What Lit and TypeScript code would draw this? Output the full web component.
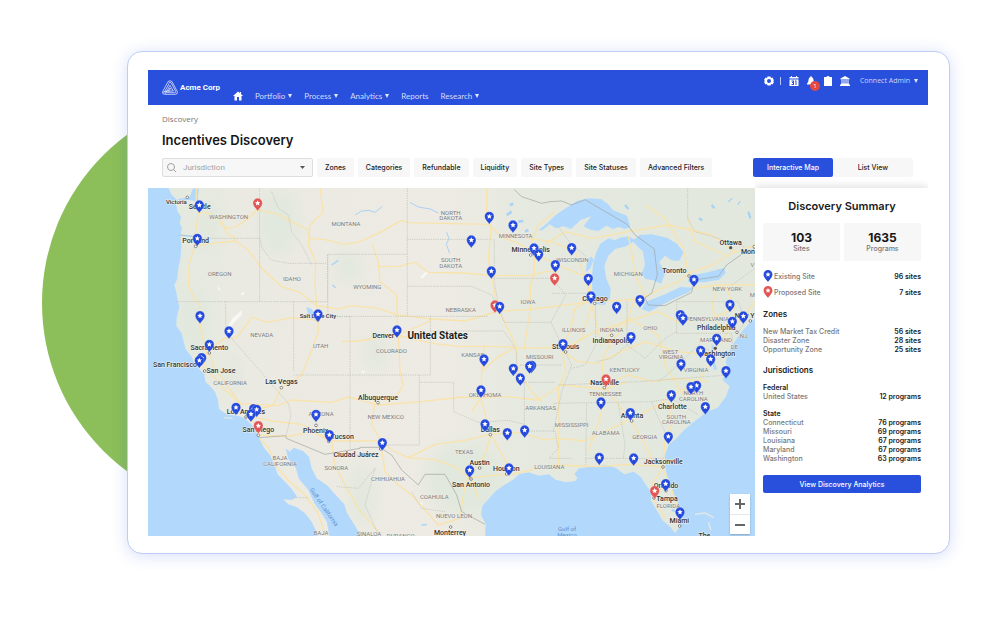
import { LitElement, html, css, svg } from "lit";
import { customElement, state } from "lit/decorators.js";

type Label = [string, number, number];

/* Map geometry: three units per pixel. */
const OCEANS = [
  "M0 0H66L80 30L98 46L93 58L98 80L108 95L104 115L111 130L106 150L109 180L107 215L100 250L97 282L88 300L94 322L98 345L103 365L95 398L94 422L110 445L116 470L122 492L140 516L150 540L163 553L178 568L181 590L196 604L210 620L219 645L222 672L245 688L280 693L300 700L320 720L335 735L343 760L355 785L375 810L388 838L398 868L418 888L440 912L456 935L440 945L415 943L430 958L455 966L480 985L500 1010L512 1035L520 1060H0Z",
  "M422 790L430 822L452 848L462 882L490 915L508 955L530 985L545 1010L555 1060H650L632 1025L606 985L598 958L572 930L548 902L515 880L500 850L492 815L474 798L446 788L434 800Z",
  "M1020 1060L1022 1018L1008 990L1012 962L1034 938L1052 918L1078 900L1104 884L1122 868L1150 862L1182 872L1212 868L1232 884L1262 892L1290 888L1298 880L1288 868L1302 850L1340 845L1382 840L1412 848L1438 868L1466 860L1488 876L1506 905L1520 920L1517 945L1535 975L1552 1006L1574 1024L1590 1044L1602 1028L1609 995L1596 948L1574 898L1562 855L1559 812L1572 778L1596 758L1618 734L1650 708L1686 680L1718 668L1742 636L1754 604L1732 584L1750 556L1742 530L1752 500L1770 468L1790 440L1806 422L1830 400V1060Z",
  "M1180 136L1205 116L1232 90L1262 70L1296 48L1330 40L1368 42L1388 56L1404 76L1446 92L1456 126L1440 132L1422 126L1404 132L1385 122L1360 138L1336 134L1316 124L1338 94L1306 106L1278 132L1256 124L1232 130L1214 118L1192 136Z",
  "M1390 160L1366 176L1352 206L1344 240L1340 280L1343 330L1356 358L1378 360L1395 340L1397 310L1384 282L1378 244L1390 212L1410 192L1444 184L1472 166L1450 154L1424 158L1410 166Z",
  "M1322 262L1326 232L1338 214L1346 224L1336 250Z",
  "M1462 168L1484 150L1520 148L1566 158L1596 176L1616 202L1602 228L1580 226L1560 212L1542 232L1562 262L1548 296L1524 286L1502 282L1490 268L1500 238L1494 200Z",
  "M1490 372L1502 350L1524 342L1560 328L1606 306L1646 308L1630 322L1590 340L1546 362L1512 380Z",
  "M1628 290L1636 272L1688 262L1738 248L1742 264L1722 284L1676 292Z",
  "M484 366L500 372L516 396L512 408L492 398Z",
  "M144 10L162 12L158 40L168 58L160 72L150 48L128 44L104 50L100 42L134 36Z",
  "M1700 476L1710 490L1706 520L1716 552L1708 556L1698 524Z",
];

const ROADS = [
  "M155 10L152 60L160 85L150 150L146 190L132 240L130 300L150 345L163 360L168 440L185 500L175 550",
  "M160 82Q210 80 232 118T338 74L400 88L440 110L488 134L495 160L540 164L600 178L645 170L700 145L768 106L790 113L1030 118L1075 158L1120 175L1168 205",
  "M156 182L200 175L270 168L310 195L350 250L410 305L465 322L515 362L580 372L620 362L700 370L758 390L860 402L960 408L1062 378L1145 374L1215 366L1340 350L1440 345L1492 340",
  "M232 118L230 108M230 112L248 148L268 156L272 168M525 10L535 80L495 120L490 180L512 230L510 300L518 390L520 440L495 510L470 570L410 608L385 660L322 678",
  "M192 495L205 545L240 590L280 650L300 690L322 705L340 750",
  "M192 492L240 460L275 458L322 396L365 412L440 398L519 406",
  "M182 545L236 612L288 656L400 662L440 645L560 652L610 636L700 660L830 650L950 636L1010 640L1080 634L1180 645L1250 600L1380 612L1450 590",
  "M300 690L380 708L470 718L512 738L552 768L610 768L710 768L740 795L790 818L870 778L960 766L1035 748L1120 742L1200 764L1240 760L1320 768L1450 706",
  "M512 722V745L556 770M340 750L430 754L510 738M690 655L680 720L710 770M760 450L765 560L775 600L752 640M682 180L700 230L705 290L755 330L758 450",
  "M700 245H760L810 232L850 262L960 264L1040 272L1160 272L1200 260L1240 260",
  "M1025 10V90L1038 130L1030 220L1042 290L1058 370L1098 450L1115 490L1210 488L1260 490L1350 440L1450 408L1540 380L1600 412L1700 400L1770 370",
  "M590 470L640 468L755 450L830 420L860 405M757 450L800 462L870 476L940 484L1018 484L1110 486L1055 518L1010 560L1008 640L1024 700L1038 750L1078 820L1100 870",
  "M1010 560L1018 484M1008 638L980 680M1038 750L1020 810L980 865L960 900L945 1000M960 880L1040 872L1100 868L1180 850L1230 840L1360 845L1450 838L1550 845",
  "M790 818L870 824L930 845L978 882M978 882L1000 940M1115 490L1120 560L1160 620L1190 650",
  "M1168 205V270L1156 300V370L1138 490M1168 205L1160 170L1180 120L1230 80M1168 205L1240 240L1290 262L1335 280L1338 340",
  "M1338 340L1290 370L1280 420L1252 500L1262 560L1240 610L1242 700L1240 850M1252 500L1310 460L1340 360L1370 480L1400 440L1450 400L1465 350L1500 335",
  "M1252 500L1300 530L1360 535L1430 500L1500 470L1600 500L1690 510",
  "M1378 600L1370 525L1400 470L1450 410M1378 600L1450 570L1520 590L1600 580L1690 590",
  "M1378 602L1370 680L1350 740L1330 800M1378 602L1420 660L1455 700L1490 760L1530 842L1555 850",
  "M1455 706L1540 660L1600 620L1660 590L1690 540L1710 490L1760 430L1790 400L1830 350",
  "M1570 650L1580 720L1560 770L1552 850L1575 900L1596 960L1605 1000M1552 850L1520 900L1530 950L1560 1000M1530 925L1575 898",
  "M1500 335L1470 270L1460 200L1450 155M1500 335L1550 310L1600 290L1630 265L1700 240L1760 205L1830 180M1630 265L1615 190L1560 100L1500 60",
  "M1645 310L1720 300L1790 300L1830 300M1720 300L1700 360L1720 420L1712 480M1770 370L1740 300M1450 400L1540 450L1560 540L1620 640",
  "M1340 350L1320 280L1290 200L1220 170L1150 160M1200 180L1260 140L1340 160L1450 140L1570 120L1700 150L1770 200M1628 100L1650 170L1740 210",
  "M345 762L372 790L398 850L430 885L475 925L520 985L540 1050M560 772L570 840L600 900L640 970L700 1040M710 790L720 860L760 900L800 930L880 1020L945 1000",
];

const STATES = [
  "M344 10V350M97 350H548V208H787M446 350V560M242 350V440L430 655L438 690L424 750",
  "M548 208V350M548 395H615M548 350L549 395M548 394H1030M787 10V394M787 163H1040M787 304H980L1040 330L1062 370",
  "M615 395V790M856 394V570M856 438H1075L1100 470L1114 500V592M446 570H856M823 570V780H720M823 592H926V680L1000 712L1090 706L1138 718",
  "M1048 163V290L1062 370L1078 412H1218M1046 280H1220M1114 592H1232M1138 592V720M1138 738H1230L1240 790L1212 820H1280",
  "M278 160H344M344 160L352 190L378 225L430 235H548M380 20L400 70L430 90L440 140L470 180L500 240M110 150L180 160L278 160",
  "M1220 280L1262 330L1218 412L1250 480L1280 540L1250 620L1225 740M1220 325H1340M1352 355V480L1320 540L1280 550M1446 350V480L1400 520L1352 530",
  "M1240 600L1480 590L1750 570M1225 655L1520 650L1580 640L1660 690M1325 655L1322 840M1420 655L1440 780L1435 820M1322 820H1430L1560 820M1520 650L1540 700L1575 770",
  "M1595 350H1780L1800 410L1780 440M1595 350V445H1760L1765 500M1446 480L1500 520L1560 460L1595 440M1540 590L1600 540L1660 480L1700 500M1628 10V100L1650 140L1720 160L1800 185M1760 300L1830 250",
  "M1240 125L1280 180L1325 215M445 938H490M1125 540L1250 540M575 905L640 910L690 850M690 850L660 960L700 1050M800 920L830 970L900 980",
];

const FRONTIERS = [
  "M343 758L422 752L424 760L540 808L645 790L645 787H705L740 810L770 855L820 900L840 868H900L935 930L950 980L1020 1018",
  "M1108 14L1130 35L1190 55L1215 50L1250 48L1280 60L1320 44L1446 118L1470 150L1528 192L1537 270L1520 325L1500 338L1510 360L1560 362L1640 322L1648 285L1720 274L1745 240L1790 208L1830 190",
];

const REGIONS: Label[] = [
  ["WASHINGTON", 251, 96], ["MONTANA", 603, 115], ["OREGON", 224, 266], ["IDAHO", 441, 281], ["NEVADA", 350, 450],
  ["UTAH", 527, 481], ["WYOMING", 667, 304], ["NORTH", 917, 82], ["DAKOTA", 917, 99], ["SOUTH", 917, 225], ["DAKOTA", 917, 242],
  ["NEBRASKA", 947, 374], ["COLORADO", 739, 498], ["KANSAS", 983, 508], ["IOWA", 1149, 351], ["MINNESOTA", 1112, 151],
  ["MISSOURI", 1184, 516], ["WISCONSIN", 1282, 223], ["MICHIGAN", 1450, 267], ["NEW YORK", 1747, 310], ["ILLINOIS", 1286, 433],
  ["INDIANA", 1400, 433], ["OHIO", 1516, 427], ["PENNSYLVANIA", 1687, 402], ["MARYLAND", 1713, 463], ["NJ", 1796, 452], ["DE", 1768, 486],
  ["WEST", 1576, 499], ["VIRGINIA", 1578, 516], ["CALIFORNIA", 255, 594], ["ARIZONA", 528, 685], ["BAJA", 405, 818], ["CALIFORNIA", 405, 835],
  ["SONORA", 574, 848], ["BAJA", 528, 1042], ["NEW MEXICO", 722, 694], ["OKLAHOMA", 1020, 628], ["ARKANSAS", 1187, 669], ["TEXAS", 957, 800],
  ["LOUISIANA", 1213, 844], ["CHIHUAHUA", 729, 880], ["COAHUILA", 868, 936], ["NUEVO LEÓN", 927, 992], ["SINALOA", 672, 1046], ["DURANGO", 767, 1052],
  ["KENTUCKY", 1439, 555], ["TENNESSEE", 1381, 627], ["VIRGINIA", 1653, 555], ["NORTH", 1645, 623], ["CAROLINA", 1645, 640],
  ["SOUTH", 1594, 694], ["CAROLINA", 1594, 711], ["MISSISSIPPI", 1280, 718], ["ALABAMA", 1382, 743], ["GEORGIA", 1499, 755], ["FLORIDA", 1570, 961],
  ["V", 1822, 238], ["M", 1822, 330],
];

const CITIES: Label[] = [
  ["Seattle", 164, 64], ["Portland", 152, 167], ["Sacramento", 193, 488], ["San Francisco", 90, 539], ["San Jose", 228, 558],
  ["Las Vegas", 409, 591], ["Los Angeles", 303, 679], ["San Diego", 340, 735], ["Phoenix", 512, 737], ["Tucson", 592, 754],
  ["Ciudad Juárez", 633, 809], ["Denver", 715, 453], ["Minneapolis", 1157, 194], ["Albuquerque", 699, 637], ["Dallas", 1036, 733],
  ["Austin", 1004, 833], ["Houston", 1084, 852], ["San Antonio", 978, 899], ["Monterrey", 915, 1043], ["Chicago", 1350, 340],
  ["Toronto", 1588, 257], ["Ottawa", 1757, 172], ["Mon", 1809, 201], ["Indianapolis", 1400, 468], ["St. Louis", 1262, 485],
  ["Philadelphia", 1714, 427], ["New Y", 1799, 393], ["Washington", 1715, 507], ["Nashville", 1379, 592], ["Charlotte", 1582, 664],
  ["Atlanta", 1461, 693], ["Jacksonville", 1555, 830], ["Orlando", 1563, 902], ["Tampa", 1566, 940], ["Miami", 1603, 1007], ["The", 1678, 1052],
];

const DOTS: [number, number][] = [
  [127, 37], [152, 184], [193, 504], [179, 558], [409, 608], [303, 696], [340, 751], [513, 721], [551, 769], [707, 792],
  [699, 653], [1036, 749], [1004, 849], [1085, 867], [978, 882], [917, 1026], [1157, 210], [1349, 355], [1632, 273], [1400, 451],
  [1262, 501], [1776, 442], [1816, 408], [1378, 608], [1460, 708], [1554, 846], [1563, 917], [1527, 939], [1604, 1023], [1828, 185], [519, 405],
];

const EXISTING: [number, number][] = [
  [163, 62], [157, 162], [165, 394], [252, 440], [193, 480], [170, 520], [163, 528], [519, 389], [1033, 96], [1104, 122], [979, 167],
  [1167, 191], [1181, 209], [1231, 241], [1039, 260], [1064, 366], [756, 437], [1017, 524], [1280, 190], [1330, 282],
  [1338, 335], [1415, 366], [1485, 346], [1647, 285], [1755, 360], [1795, 395], [1762, 411], [1606, 391], [1614, 401], [1458, 457],
  [1254, 478], [1715, 462], [1667, 498], [1697, 524], [1608, 538], [273, 669], [326, 673], [335, 675], [318, 689], [513, 690],
  [553, 751], [1105, 552], [1160, 543], [1154, 545], [1126, 581], [1008, 617], [1020, 719], [1087, 745], [1139, 737], [712, 775],
  [974, 857], [1092, 851], [1743, 559], [1655, 603], [1638, 607], [1579, 631], [1368, 653], [1456, 685], [1681, 667], [1570, 756],
  [1363, 819], [1466, 821], [1562, 898], [1605, 983],
];
const PROPOSED: [number, number][] = [[338, 56], [1229, 281], [1050, 362], [340, 724], [1383, 584], [1529, 919]];

const PIN = "M0 22C-3 15-14 9-14-2A14 14 0 0 1 14-2C14 9 3 15 0 22Z";
const STAR = "M0-10L2.4-4.8L8-4.2L3.9-.4L5 5.2L0 2.4L-5 5.2L-3.9-.4L-8-4.2L-2.4-4.8Z";

const pin = (x: number, y: number, kind: string) => svg`
  <g transform="translate(${x} ${y})"><path class="pin ${kind}" d=${PIN} /><path fill="#fff" d=${STAR} /></g>`;

@customElement("site-map")
export class SiteMap extends LitElement {
  static styles = css`
    :host { display: block; position: relative; overflow: hidden; min-height: 348px; background: #b2d9fc; }
    svg { display: block; width: 100%; height: 100%; font-family: Roboto, sans-serif; }
    .water { fill: #b2d9fc; }
    .roads { fill: none; stroke: #f9e3ab; stroke-width: 4; stroke-linejoin: round; }
    .states { fill: none; stroke: #bcbcb8; stroke-width: 2; stroke-dasharray: 4 3; }
    .frontiers { fill: none; stroke: #9fa2a2; stroke-width: 2; stroke-linejoin: round; }
    text { text-anchor: middle; paint-order: stroke; stroke-linejoin: round; stroke: #f3f2ec; }
    .region { font-size: 18px; fill: #77797b; stroke-width: 2px; font-weight: 400; }
    .city { font-size: 21px; fill: #303234; stroke-width: 3px; font-weight: 500; }
    .town { font-size: 18px; fill: #303234; stroke-width: 3px; font-weight: 500; }
    .country { font-size: 30px; fill: #1d1e20; stroke-width: 5px; font-weight: 700; }
    .sea { font-size: 18px; fill: #5c8fd0; stroke: none; }
    .dot { fill: #fff; stroke: #555; stroke-width: 2; }
    .pin { stroke: #fff; stroke-opacity: 0.6; stroke-width: 1; }
    .existing { fill: #2449dc; }
    .proposed { fill: #e25555; }
    .zoom { position: absolute; right: 5px; bottom: 2px; display: grid; width: 20px; background: #fff; box-shadow: 0 1px 2px rgba(0, 0, 0, 0.25); }
    .zoom button { height: 20px; padding: 0; border: 0; background: none; display: grid; place-items: center; }
    .zoom button + button { border-top: 1px solid #e8e8e8; }
    .zoom svg { width: 10px; height: 10px; stroke: #666; stroke-width: 2; }
    .canvas { position: absolute; inset: 0; }
  `;

  render() {
    return html`
      <svg class="canvas" viewBox="9 9 1821 1044" preserveAspectRatio="xMidYMid slice" role="img" aria-label="Sites across the United States">
        <defs>
          <linearGradient id="land" gradientUnits="userSpaceOnUse" x1="60" y1="0" x2="1830" y2="0">
            <stop offset="0" stop-color="#e3e9df" /><stop offset=".14" stop-color="#ebeae2" />
            <stop offset=".48" stop-color="#edebe3" /><stop offset=".62" stop-color="#e5e9df" /><stop offset="1" stop-color="#e2e8de" />
          </linearGradient>
          <filter id="soft" x="-30%" y="-30%" width="160%" height="160%"><feGaussianBlur stdDeviation="22" /></filter>
        </defs>
        <rect width="1840" height="1060" fill="url(#land)" />
        <g fill="#e1e8dd" filter="url(#soft)">
          <ellipse cx="400" cy="110" rx="60" ry="100" /><ellipse cx="190" cy="120" rx="30" ry="90" /><ellipse cx="150" cy="400" rx="40" ry="90" />
          <ellipse cx="610" cy="245" rx="35" ry="50" /><ellipse cx="690" cy="500" rx="30" ry="60" /><ellipse cx="1560" cy="570" rx="120" ry="50" />
          <ellipse cx="260" cy="570" rx="25" ry="60" /><ellipse cx="650" cy="930" rx="35" ry="90" /><ellipse cx="960" cy="880" rx="120" ry="110" />
        </g>
        <g fill="#f8f7f4">
          <path d="M246 430L262 400L292 374L290 390L268 412L252 432Z" /><path d="M825 278L840 262L852 260L834 280Z" />
          <path d="M286 328L300 318L294 332Z" /><path d="M648 560L662 556L656 566Z" /><path d="M820 960L834 950L830 968Z" /><path d="M216 300L228 316L222 318Z" />
        </g>
        ${OCEANS.map((d) => svg`<path class="water" d=${d} />`)}
        <g fill="none" stroke="#a9d2f5" stroke-width="3">
          <path d="M630 90L650 78L672 76L690 82L712 64" /><path d="M795 52L820 66L856 72L880 84" /><path d="M905 142L912 160L904 178L914 205" />
          <path d="M1085 90L1100 80M1120 110L1135 108M1140 140L1150 135M1094 60L1105 56" stroke-width="8" />
          <path d="M560 240L580 226M562 300L572 308M100 150L145 154M640 1040L660 1052M830 1020L846 1018M1750 50L1762 40M1778 60L1786 48" stroke-width="4" />
          <path d="M1662 100L1672 106M1700 60L1708 70M1440 60L1450 72M1810 80L1816 100M1580 975L1590 978" stroke-width="7" />
        </g>
        <g class="roads">${ROADS.map((d) => svg`<path d=${d} />`)}</g>
        <g class="states">${STATES.map((d) => svg`<path d=${d} />`)}</g>
        <g class="frontiers">${FRONTIERS.map((d) => svg`<path d=${d} />`)}</g>
        <g fill="none" stroke="#e5e9df" stroke-width="4"><path d="M1650 988L1680 984L1706 998M1690 1012L1698 1035M238 698L262 700" /></g>
        ${DOTS.map(([x, y]) => svg`<circle class="dot" cx=${x} cy=${y} r="4" />`)}
        <circle cx="1757" cy="188" r="5" fill="#555" /><circle cx="1711" cy="490" r="5" fill="#555" />
        ${REGIONS.map(([t, x, y]) => svg`<text class="region" x=${x} y=${y + 7}>${t}</text>`)}
        ${CITIES.map(([t, x, y]) => svg`<text class="city" x=${x} y=${y + 7}>${t}</text>`)}
        <text class="town" x="94" y="57">Victoria</text>
        <text class="town" x="519" y="400">Salt Lake City</text>
        <text class="country" x="878" y="462">United States</text>
        <text class="sea" x="1266" y="1038">Gulf of</text>
        <text class="sea" x="1266" y="1055">Mexico</text>
        <text class="sea" transform="translate(532 970) rotate(55)">Gulf of California</text>
        ${PROPOSED.map(([x, y]) => pin(x, y, "proposed"))}
        ${EXISTING.map(([x, y]) => pin(x, y, "existing"))}
      </svg>
      <div class="zoom">
        <button aria-label="Zoom in"><svg viewBox="0 0 10 10"><path d="M5 0V10M0 5H10" /></svg></button>
        <button aria-label="Zoom out"><svg viewBox="0 0 10 10"><path d="M0 5H10" /></svg></button>
      </div>
    `;
  }
}

const legendPin = (kind: string) => html`
  <svg class="legend-pin ${kind}" viewBox="-14 -16 28 38" aria-hidden="true"><path d=${PIN} /><path fill="#fff" d=${STAR} /></svg>`;

const rows = (items: [string, string][]) => html`
  <dl>${items.map(([k, v]) => html`<div class="row"><dt>${k}</dt><dd>${v}</dd></div>`)}</dl>`;

@customElement("discovery-summary")
export class DiscoverySummary extends LitElement {
  static styles = css`
    :host { display: block; padding: 10px 7px 0 8px; background: #fff; box-shadow: 0 -2px 8px rgba(0, 0, 0, 0.12); clip-path: inset(-12px 0 0 0); font-size: 7px; line-height: 9px; color: #1b1b1d; }
    h2, h3, h4, dl, dd { margin: 0; }
    h2 { font-size: 11px; line-height: 16px; font-weight: 600; text-align: center; }
    h3 { font-size: 8px; line-height: 12px; font-weight: 600; margin: 10px 0 7px; }
    h4 { font-size: 7px; line-height: 9px; font-weight: 600; margin-top: 8px; }
    h3 + h4 { margin-top: 0; }
    .stats { display: grid; grid-template-columns: 1fr 1fr; gap: 4px; margin-top: 9px; }
    .stat { display: grid; align-content: center; justify-items: center; height: 38px; background: #f7f7f7; color: #77777a; font-weight: 500; }
    .stat b { font-size: 12px; line-height: 13px; font-weight: 700; color: #161618; }
    .legend { margin-top: 7px; }
    .legend + h3 { margin-top: 8px; }
    .row { display: flex; justify-content: space-between; }
    .legend .row { align-items: center; height: 16px; }
    .legend dt { display: flex; align-items: center; gap: 1px; }
    dt { color: #77777a; font-weight: 500; }
    dd { font-weight: 600; }
    .legend-pin { width: 10px; height: 12px; }
    .existing { fill: #2449dc; }
    .proposed { fill: #e25555; }
    .action { display: block; width: 100%; height: 18px; margin-top: 12px; padding: 0; border: 0; border-radius: 2px; background: #2950dd; color: #fff; font: 500 7px/9px Inter, sans-serif; }
  `;

  render() {
    return html`
      <h2>Discovery Summary</h2>
      <div class="stats">
        <div class="stat"><b>103</b><span>Sites</span></div>
        <div class="stat"><b>1635</b><span>Programs</span></div>
      </div>
      <dl class="legend">
        <div class="row"><dt>${legendPin("existing")}Existing Site</dt><dd>96 sites</dd></div>
        <div class="row"><dt>${legendPin("proposed")}Proposed Site</dt><dd>7 sites</dd></div>
      </dl>
      <h3>Zones</h3>
      ${rows([["New Market Tax Credit", "56 sites"], ["Disaster Zone", "28 sites"], ["Opportunity Zone", "25 sites"]])}
      <h3>Jurisdictions</h3>
      <h4>Federal</h4>
      ${rows([["United States", "12 programs"]])}
      <h4>State</h4>
      ${rows([["Connecticut", "76 programs"], ["Missouri", "69 programs"], ["Louisiana", "67 programs"], ["Maryland", "67 programs"], ["Washington", "63 programs"]])}
      <button class="action">View Discovery Analytics</button>
    `;
  }
}

@customElement("app-root")
export class AppRoot extends LitElement {
  static styles = css`
    :host { display: block; position: relative; overflow: hidden; min-height: 100vh; box-sizing: border-box; padding: 51px 50px 87px 127px; background: #fff; font-family: Inter, sans-serif; color: #161618; }
    .disc { position: absolute; left: 42px; top: 94px; width: 418px; height: 418px; border-radius: 50%; background: #8cbf59; }
    .frame { position: relative; padding: 18px 21px 17px 20px; border: 1px solid #bccdf8; border-radius: 15px; background: #fff; box-shadow: 0 2px 16px rgba(41, 80, 221, 0.18); }
    header { display: flex; height: 35px; background: #2950dd; color: #fff; padding: 0 10px 0 14px; }
    .brand { display: flex; align-items: center; gap: 2px; font: 700 8px/12px Roboto, sans-serif; color: #fff; text-decoration: none; }
    .brand svg { width: 16px; height: 15px; }
    nav { display: flex; align-self: flex-end; align-items: center; gap: 12px; margin-left: 13px; padding-bottom: 4px; }
    nav a, nav button { display: flex; align-items: center; gap: 3px; padding: 0; border: 0; background: none; font: 400 8px/10px Lato, sans-serif; color: #d3ddfc; text-decoration: none; }
    .home svg { width: 10px; height: 10px; display: block; }
    .down { width: 4px; height: 4px; fill: #e4eafd; }
    .tools { display: flex; align-self: flex-start; align-items: center; gap: 7px; margin-left: auto; padding-top: 6px; }
    .icon { position: relative; display: block; width: 10px; height: 10px; padding: 0; border: 0; background: none; }
    .icon svg { display: block; width: 10px; height: 10px; fill: #fff; }
    .bar { width: 1px; height: 8px; margin: 0 1px 0 -1px; background: #b7c6f8; }
    .badge { position: absolute; left: 4px; top: 5px; width: 10px; height: 10px; border-radius: 50%; background: #e5493d; color: #fff; font: 400 6px/10px "Open Sans", sans-serif; text-align: center; }
    .account { display: flex; align-items: center; gap: 4px; margin-left: 3px; padding: 0; border: 0; background: none; font: 400 7px/10px "Open Sans", sans-serif; color: #c9d5fb; }
    .head { padding: 9px 15px 0 14px; }
    .crumb { display: block; width: max-content; font: 400 8px/10px "Open Sans", sans-serif; color: #77777a; text-decoration: none; }
    h1 { margin: 8px 0 10px; font-size: 13px; line-height: 16px; font-weight: 600; }
    .filters { display: flex; gap: 4px; padding-bottom: 11px; }
    .filters button { height: 19px; padding: 0 8px; border: 0; border-radius: 2px; background: #f7f7f7; color: #1b1b1d; font: 500 7px/10px Inter, sans-serif; white-space: nowrap; }
    .pick { position: relative; width: 151px; }
    .pick select { display: block; appearance: none; width: 100%; height: 19px; padding: 0 20px; border: 1px solid #dedede; border-radius: 2px; background: #f7f7f7; color: #a2a2a4; font: 400 8px/10px Roboto, sans-serif; }
    .pick svg { position: absolute; pointer-events: none; }
    .lens { left: 5px; top: 5px; width: 10px; height: 10px; fill: none; stroke: #a2a2a4; }
    .caret { right: 8px; top: 8px; width: 5px; height: 3px; fill: #555; }
    .views { display: grid; grid-template-columns: 80px 80px; margin-left: auto; }
    .filters .views button { padding: 0; }
    .filters .views .on { background: #2950dd; color: #fff; }
    main { display: grid; grid-template-columns: 1fr 173px; }
  `;

  @state() private view = "Interactive Map";

  private down = () => html`<svg class="down" viewBox="0 0 4 4" aria-hidden="true"><path d="M0 0H4L2 4Z" /></svg>`;

  private menu(name: string) {
    return html`<button>${name}${this.down()}</button>`;
  }

  render() {
    const filters = ["Zones", "Categories", "Refundable", "Liquidity", "Site Types", "Site Statuses", "Advanced Filters"];
    return html`
      <div class="disc"></div>
      <div class="frame">
        <header>
          <a class="brand" href="#">
            <svg viewBox="0 0 48 45" fill="none" stroke="#fff" stroke-width="2" stroke-linejoin="round" aria-hidden="true">
              <path d="M18 5Q24-1 30 5L46 35Q48 43 40 43H8Q0 43 2 35Z" />
              <path d="M20 9Q24 5 28 9L41 34Q42 38 38 38H14M7 37L21 11M12 38L24 16L34 33H19L24 24L27 29M2 37Q8 33 24 33M9 42L15 32" />
            </svg>
            Acme Corp
          </a>
          <nav>
            <a class="home" href="#" aria-label="Home"><svg viewBox="0 0 20 20" fill="#fff"><path d="M10 1L0 10H3V19H8V12H12V19H17V10H20L16 6V2H14V4Z" /></svg></a>
            ${this.menu("Portfolio")}${this.menu("Process")}${this.menu("Analytics")}
            <a href="#">Reports</a>
            ${this.menu("Research")}
          </nav>
          <div class="tools">
            <button class="icon" aria-label="Settings"><svg viewBox="0 0 20 20"><path fill-rule="evenodd" d="M7 1H13L14 4L17 3L20 9L18 10L20 12L17 17L14 16L13 19H7L6 16L3 17L0 12L2 10L0 8L3 3L6 4ZM10 6A4 4 0 1 0 10 14A4 4 0 1 0 10 6Z" /></svg></button>
            <span class="bar"></span>
            <button class="icon" aria-label="Calendar"><svg viewBox="0 0 20 20"><path fill-rule="evenodd" d="M1 2H4V0H6V2H14V0H16V2H19V5H1ZM1 7H19V20H1ZM5 9V11H8V12H6V14H8V16H5V18H10V9ZM12 9V11H13V18H15V9Z" /></svg></button>
            <button class="icon" aria-label="Notifications"><svg viewBox="0 0 20 20"><path d="M9 0H11V2Q15 3 15 8Q15 13 18 15V17H2V15Q5 13 5 8Q5 3 9 2ZM8 18H12Q12 20 10 20Q8 20 8 18Z" /></svg><span class="badge">1</span></button>
            <button class="icon" aria-label="Tasks"><svg viewBox="0 0 20 20"><path d="M3 2H7Q7 0 10 0Q13 0 13 2H17Q18 2 18 3V19Q18 20 17 20H3Q2 20 2 19V3Q2 2 3 2Z" /></svg></button>
            <button class="icon" aria-label="Institutions"><svg viewBox="0 0 20 20"><path d="M10 0L19 5V7H1V5ZM3 8H5V15H3ZM7 8H9V15H7ZM11 8H13V15H11ZM15 8H17V15H15ZM2 15H18V17H20V20H0V17H2Z" /></svg></button>
            <button class="account">Connect Admin${this.down()}</button>
          </div>
        </header>
        <div class="head">
          <a class="crumb" href="#">Discovery</a>
          <h1>Incentives Discovery</h1>
          <div class="filters">
            <div class="pick">
              <select aria-label="Jurisdiction"><option>Jurisdiction</option></select>
              <svg class="lens" viewBox="0 0 10 10" aria-hidden="true"><circle cx="4" cy="4" r="3.5" /><path d="M6.5 6.5L9 9" /></svg>
              <svg class="caret" viewBox="0 0 5 3" aria-hidden="true"><path d="M0 0H5L2.5 3Z" /></svg>
            </div>
            ${filters.map((f) => html`<button>${f}</button>`)}
            <div class="views">
              ${["Interactive Map", "List View"].map(
                (v) => html`<button class=${v === this.view ? "on" : ""} aria-pressed=${v === this.view} @click=${() => (this.view = v)}>${v}</button>`,
              )}
            </div>
          </div>
        </div>
        <main>
          <site-map></site-map>
          <discovery-summary></discovery-summary>
        </main>
      </div>
    `;
  }
}
